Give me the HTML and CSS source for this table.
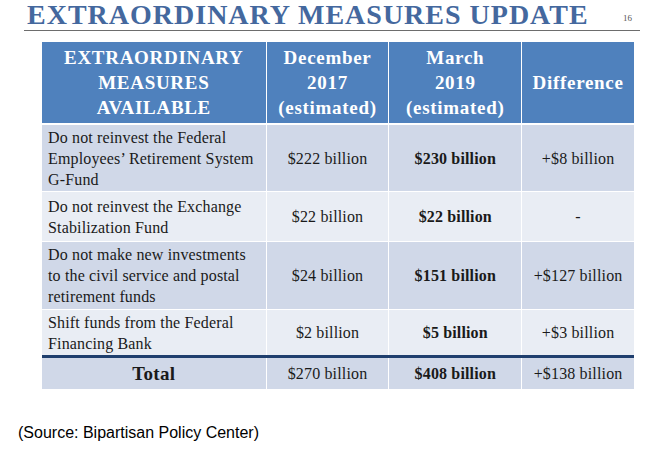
FILE: index.html
```html
<!DOCTYPE html>
<html>
<head>
<meta charset="utf-8">
<link rel="stylesheet" href="styles.css">
</head>
<body>
<div class="slide">
  <div class="title-bar">
    <h1 class="title">EXTRAORDINARY MEASURES UPDATE</h1>
    <span class="page-num">16</span>
  </div>
  <table class="measures">
    <thead>
      <tr>
        <th class="c1">EXTRAORDINARY<br>MEASURES<br>AVAILABLE</th>
        <th class="c2">December<br>2017<br>(estimated)</th>
        <th class="c3">March<br>2019<br>(estimated)</th>
        <th class="c4">Difference</th>
      </tr>
    </thead>
    <tbody>
      <tr class="odd r1">
        <td class="label">Do not reinvest the Federal Employees’ Retirement System G-Fund</td>
        <td>$222 billion</td>
        <td class="bold">$230 billion</td>
        <td>+$8 billion</td>
      </tr>
      <tr class="even r2">
        <td class="label">Do not reinvest the Exchange Stabilization Fund</td>
        <td>$22 billion</td>
        <td class="bold">$22 billion</td>
        <td>-</td>
      </tr>
      <tr class="odd r3">
        <td class="label">Do not make new investments to the civil service and postal retirement funds</td>
        <td>$24 billion</td>
        <td class="bold">$151 billion</td>
        <td>+$127 billion</td>
      </tr>
      <tr class="even r4">
        <td class="label">Shift funds from the Federal Financing Bank</td>
        <td>$2 billion</td>
        <td class="bold">$5 billion</td>
        <td>+$3 billion</td>
      </tr>
      <tr class="total">
        <td class="total-label">Total</td>
        <td>$270 billion</td>
        <td class="bold">$408 billion</td>
        <td>+$138 billion</td>
      </tr>
    </tbody>
  </table>
  <p class="source">(Source: Bipartisan Policy Center)</p>
</div>
</body>
</html>
```

FILE: styles.css
```css
html, body {
  margin: 0;
  padding: 0;
  background: #ffffff;
}
.slide {
  width: 657px;
  height: 457px;
  position: relative;
  font-family: "Liberation Serif", "Times New Roman", serif;
}
.title-bar {
  margin: 0 17px 0 24px;
  height: 30px;
  border-bottom: 1px solid #6d6d6d;
  display: flex;
  align-items: flex-end;
  justify-content: space-between;
}
.title {
  margin: 0 0 1px 3px;
  font-size: 28px;
  line-height: 28px;
  font-weight: bold;
  color: #44689e;
  letter-spacing: 1px;
  white-space: nowrap;
}
.page-num {
  font-size: 9px;
  color: #555;
  margin: 0 8px 7px 0;
}
.measures {
  margin: 11px 0 0 42px;
  border-collapse: collapse;
  width: 592px;
  font-size: 16px;
  letter-spacing: 0.15px;
  color: #1a1a1a;
}
.measures th {
  background: #4f81bd;
  color: #ffffff;
  font-weight: bold;
  font-size: 19px;
  letter-spacing: 0.7px;
  line-height: 25px;
  height: 81px;
  padding: 0;
  text-align: center;
  vertical-align: middle;
  border-right: 1px solid #ffffff;
  border-bottom: 2px solid #ffffff;
}
.measures th:last-child, .measures td:last-child {
  border-right: none;
}
.c1 { width: 224px; }
.c2 { width: 122px; }
.c3 { width: 132px; }
.c4 { width: 112px; }
.measures td {
  text-align: center;
  vertical-align: middle;
  padding: 0;
  line-height: 21px;
  border-right: 1px solid #ffffff;
  border-bottom: 1px solid #ffffff;
}
.measures td.label {
  text-align: left;
  padding: 0 4px 0 6px;
}
.measures .bold { font-weight: bold; }
.odd td { background: #d0d8e8; }
.even td { background: #e9edf4; }
.r1 td { height: 66px; }
.r2 td { height: 49px; }
.r3 td { height: 67px; }
.r4 td { height: 45px; border-bottom: 3px solid #1f3f6e; }
.total td { background: #d0d8e8; height: 31px; }
.measures td.total-label {
  font-weight: bold;
  font-size: 19px;
  letter-spacing: 0.3px;
}
.source {
  margin: 34px 0 0 18px;
  font-family: "Liberation Sans", Arial, sans-serif;
  font-size: 16px;
  color: #000;
}
```
